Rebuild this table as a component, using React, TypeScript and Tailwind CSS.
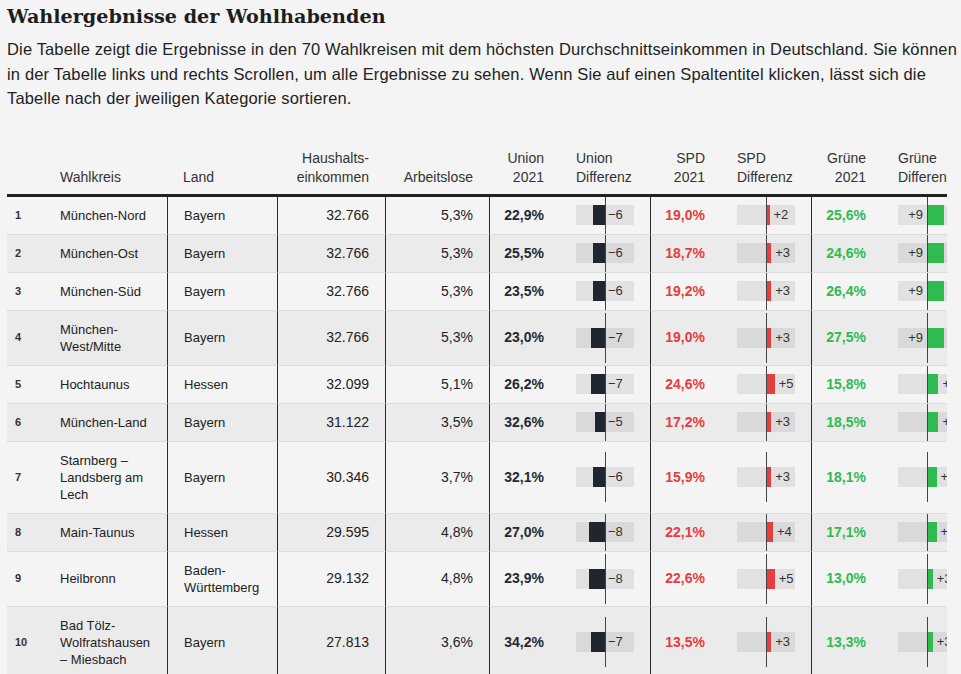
import React from 'react';

type Row = {
  nr: number;
  kreis: React.ReactNode;
  land: React.ReactNode;
  einkommen: string;
  arbeitslose: string;
  union: string;
  unionDiff: number;
  spd: string;
  spdDiff: number;
  gruene: string;
  grueneDiff: number;
};

const rows: Row[] = [
  { nr: 1, kreis: 'München-Nord', land: 'Bayern', einkommen: '32.766', arbeitslose: '5,3%', union: '22,9%', unionDiff: -6, spd: '19,0%', spdDiff: 2, gruene: '25,6%', grueneDiff: 9 },
  { nr: 2, kreis: 'München-Ost', land: 'Bayern', einkommen: '32.766', arbeitslose: '5,3%', union: '25,5%', unionDiff: -6, spd: '18,7%', spdDiff: 3, gruene: '24,6%', grueneDiff: 9 },
  { nr: 3, kreis: 'München-Süd', land: 'Bayern', einkommen: '32.766', arbeitslose: '5,3%', union: '23,5%', unionDiff: -6, spd: '19,2%', spdDiff: 3, gruene: '26,4%', grueneDiff: 9 },
  { nr: 4, kreis: <>München-<br />West/Mitte</>, land: 'Bayern', einkommen: '32.766', arbeitslose: '5,3%', union: '23,0%', unionDiff: -7, spd: '19,0%', spdDiff: 3, gruene: '27,5%', grueneDiff: 9 },
  { nr: 5, kreis: 'Hochtaunus', land: 'Hessen', einkommen: '32.099', arbeitslose: '5,1%', union: '26,2%', unionDiff: -7, spd: '24,6%', spdDiff: 5, gruene: '15,8%', grueneDiff: 6 },
  { nr: 6, kreis: 'München-Land', land: 'Bayern', einkommen: '31.122', arbeitslose: '3,5%', union: '32,6%', unionDiff: -5, spd: '17,2%', spdDiff: 3, gruene: '18,5%', grueneDiff: 6 },
  { nr: 7, kreis: <>Starnberg –<br />Landsberg am<br />Lech</>, land: 'Bayern', einkommen: '30.346', arbeitslose: '3,7%', union: '32,1%', unionDiff: -6, spd: '15,9%', spdDiff: 3, gruene: '18,1%', grueneDiff: 5 },
  { nr: 8, kreis: 'Main-Taunus', land: 'Hessen', einkommen: '29.595', arbeitslose: '4,8%', union: '27,0%', unionDiff: -8, spd: '22,1%', spdDiff: 4, gruene: '17,1%', grueneDiff: 5 },
  { nr: 9, kreis: 'Heilbronn', land: <>Baden-<br />Württemberg</>, einkommen: '29.132', arbeitslose: '4,8%', union: '23,9%', unionDiff: -8, spd: '22,6%', spdDiff: 5, gruene: '13,0%', grueneDiff: 3 },
  { nr: 10, kreis: <>Bad Tölz-<br />Wolfratshausen<br />– Miesbach</>, land: 'Bayern', einkommen: '27.813', arbeitslose: '3,6%', union: '34,2%', unionDiff: -7, spd: '13,5%', spdDiff: 3, gruene: '13,3%', grueneDiff: 3 },
];

const fmt = (v: number) => (v < 0 ? `−${Math.abs(v)}` : `+${v}`);

// half of the 58px track, in px
const HALF = 29;

function DiffBar({ value, scale, color }: { value: number; scale: number; color: string }) {
  const w = Math.abs(value) * scale;
  const flip = value > 0 && w + 18 > 32;
  return (
    <div className="relative w-[58px] h-[20px] bg-black/[0.075]">
      <div
        className={`absolute top-0 h-full ${color}`}
        style={value < 0 ? { left: HALF - w, width: w } : { left: HALF, width: w }}
      />
      <span
        className="absolute top-0 text-[13px] leading-[20px] text-[#333] whitespace-nowrap"
        style={
          value < 0
            ? { left: HALF + 3 }
            : flip
              ? { right: HALF + 4 }
              : { left: HALF + w + 4 }
        }
      >
        {fmt(value)}
      </span>
    </div>
  );
}

function DiffCell({ value, scale, color, bg }: { value: number; scale: number; color: string; bg: string }) {
  return (
    <td className={`relative pl-4 py-[8px] border-b border-[#dcdcdc] align-middle ${bg}`}>
      <DiffBar value={value} scale={scale} color={color} />
      <div className="absolute inset-0 overflow-hidden pointer-events-none">
        <div className="absolute left-[45px] top-1/2 -translate-y-1/2 h-[50px] w-px bg-[#444]" />
      </div>
    </td>
  );
}

export default function App() {
  const th = 'align-bottom pb-[7px] leading-[19px] text-[14px] font-normal text-[#333] border-b-[3px] border-[#222]';
  const td = 'py-[10px] leading-[17px] border-b border-[#dcdcdc] align-middle';
  return (
    <div className="min-h-screen bg-[#f4f4f4] text-[#222] font-['Liberation_Sans',Arial,sans-serif]">
      <div className="px-[7px] pt-[3px]">
        <h1 className="font-['DejaVu_Serif',Georgia,serif] font-bold text-[19.2px] leading-[28px] text-[#1e1e1e]">
          Wahlergebnisse der Wohlhabenden
        </h1>
        <p className="mt-[6px] text-[16.5px] leading-[24.5px] tracking-[0.15px] text-[#222] whitespace-nowrap">
          Die Tabelle zeigt die Ergebnisse in den 70 Wahlkreisen mit dem höchsten Durchschnittseinkommen in Deutschland. Sie können
          <br />
          in der Tabelle links und rechts Scrollen, um alle Ergebnisse zu sehen. Wenn Sie auf einen Spaltentitel klicken, lässt sich die
          <br />
          Tabelle nach der jweiligen Kategorie sortieren.
        </p>

        <div className="mt-[38px] w-[940px] overflow-hidden">
          <table className="table-fixed w-[965px] border-separate border-spacing-0 text-[14px]">
            <colgroup>
              <col className="w-[37px]" />
              <col className="w-[123px]" />
              <col className="w-[110px]" />
              <col className="w-[108px]" />
              <col className="w-[104px]" />
              <col className="w-[71px]" />
              <col className="w-[90px]" />
              <col className="w-[71px]" />
              <col className="w-[90px]" />
              <col className="w-[71px]" />
              <col className="w-[90px]" />
            </colgroup>
            <thead>
              <tr>
                <th className={th}></th>
                <th className={`${th} pl-4 text-left`}>Wahlkreis</th>
                <th className={`${th} pl-4 text-left`}>Land</th>
                <th className={`${th} pr-4 text-right`}>Haushalts-<br />einkommen</th>
                <th className={`${th} pr-4 text-right`}>Arbeitslose</th>
                <th className={`${th} pr-4 text-right`}>Union<br />2021</th>
                <th className={`${th} pl-4 text-left whitespace-nowrap`}>Union<br />Differenz</th>
                <th className={`${th} pr-4 text-right`}>SPD<br />2021</th>
                <th className={`${th} pl-4 text-left whitespace-nowrap`}>SPD<br />Differenz</th>
                <th className={`${th} pr-4 text-right`}>Grüne<br />2021</th>
                <th className={`${th} pl-4 text-left whitespace-nowrap`}>Grüne<br />Differenz</th>
              </tr>
            </thead>
            <tbody>
              {rows.map((r) => {
                const bg = r.nr % 2 === 0 ? 'bg-[#ebebeb]' : 'bg-[#f4f4f4]';
                return (
                  <tr key={r.nr}>
                    <td className={`${td} ${bg} pl-2 text-[11px] font-bold text-[#333]`}>{r.nr}</td>
                    <td className={`${td} ${bg} pl-4 text-[13px] whitespace-nowrap`}>{r.kreis}</td>
                    <td className={`${td} ${bg} pl-4 text-[13px] border-l border-l-[#2a2a2a] whitespace-nowrap`}>{r.land}</td>
                    <td className={`${td} ${bg} pr-4 text-right border-l border-l-[#2a2a2a]`}>{r.einkommen}</td>
                    <td className={`${td} ${bg} pr-4 text-right border-l border-l-[#2a2a2a]`}>{r.arbeitslose}</td>
                    <td className={`${td} ${bg} pr-4 text-right border-l border-l-[#2a2a2a] font-bold text-[#222a35]`}>{r.union}</td>
                    <DiffCell value={r.unionDiff} scale={2} color="bg-[#1f2630]" bg={bg} />
                    <td className={`${td} ${bg} pr-4 text-right border-l border-l-[#2a2a2a] font-bold text-[#e53e3e]`}>{r.spd}</td>
                    <DiffCell value={r.spdDiff} scale={1.75} color="bg-[#e53e3e]" bg={bg} />
                    <td className={`${td} ${bg} pr-4 text-right border-l border-l-[#2a2a2a] font-bold text-[#2fbb4f]`}>{r.gruene}</td>
                    <DiffCell value={r.grueneDiff} scale={1.9} color="bg-[#2fbb4f]" bg={bg} />
                  </tr>
                );
              })}
            </tbody>
          </table>
        </div>
      </div>
    </div>
  );
}
